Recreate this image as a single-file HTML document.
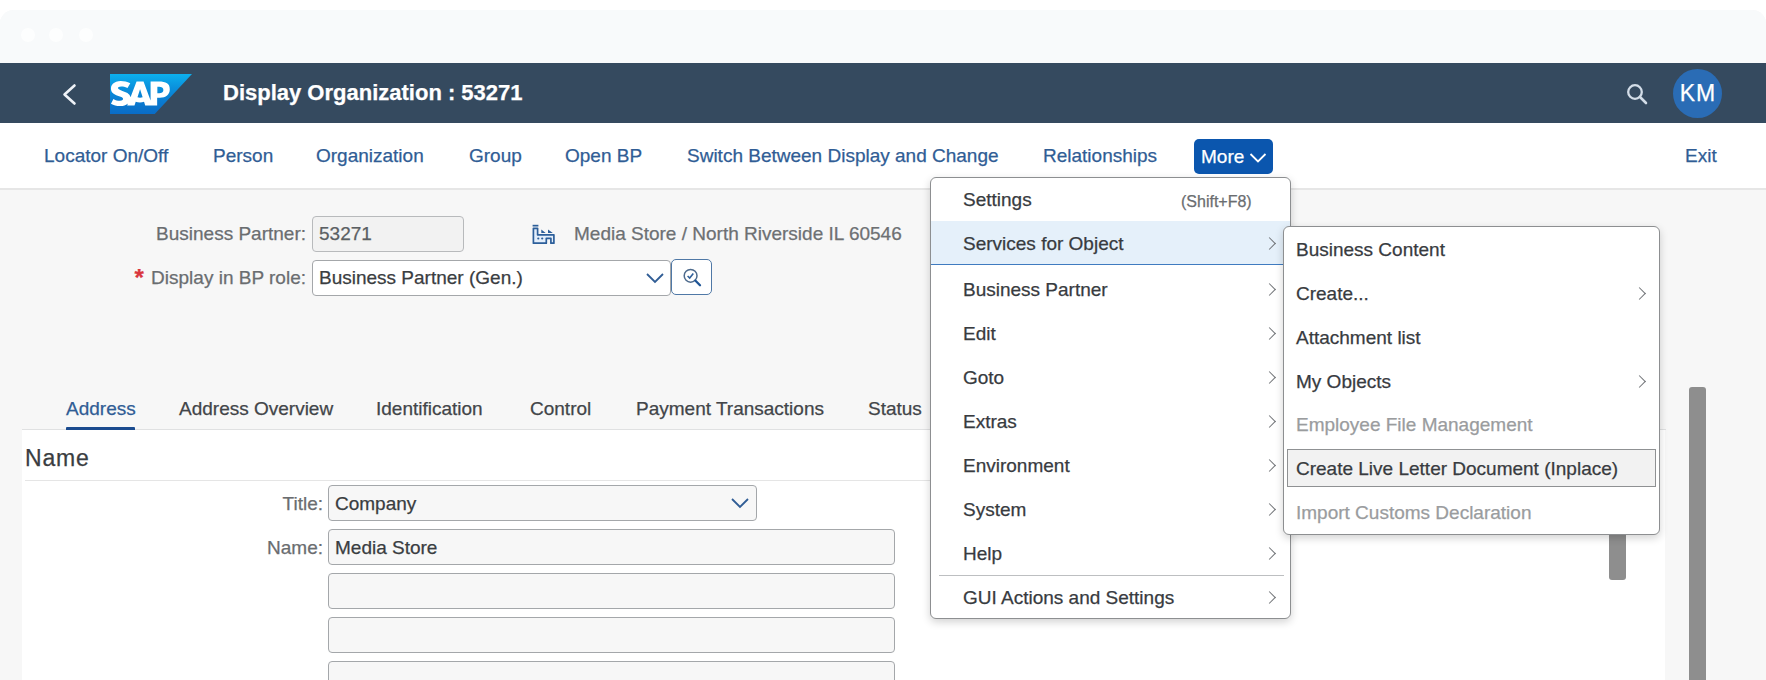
<!DOCTYPE html>
<html><head><meta charset="utf-8">
<style>
*{box-sizing:border-box;margin:0;padding:0}
html,body{width:1766px;height:680px;overflow:hidden;background:#fff;font-family:"Liberation Sans",sans-serif;-webkit-text-stroke:0.25px currentColor}
.abs{position:absolute}
#frame{position:absolute;left:0;top:10px;width:1766px;height:700px;background:#f7f7f7;border-radius:14px 14px 0 0;overflow:hidden}
#titlebar{position:absolute;left:0;top:0;width:1766px;height:53px;background:#f8fafb}
#shell{position:absolute;left:0;top:53px;width:1766px;height:60px;background:#354a5f}
#toolbar{position:absolute;left:0;top:113px;width:1766px;height:67px;background:#fff;border-bottom:2px solid #e6e6e6}
.tb{position:absolute;top:22px;font-size:19px;color:#305d95;white-space:nowrap;line-height:22px}
.lbl{position:absolute;font-size:19px;color:#6a6d70;white-space:nowrap;text-align:right;line-height:22px}
.inp{position:absolute;border:1px solid #a4a7aa;border-radius:4px;background:#fff;font-size:19px;color:#3a3d41;line-height:22px;padding:6px 0 0 6px;white-space:nowrap}
.menu{position:absolute;background:#fff;border:1px solid #8d8f91;border-radius:6px;box-shadow:0 3px 8px rgba(0,0,0,0.18)}
.mi{position:absolute;left:0;right:0;height:44px;font-size:19px;color:#383b3f;line-height:22px;white-space:nowrap}
.mi span.t{position:absolute;left:32px;top:11px}
.chev{position:absolute;width:9px;height:9px;border-right:1.6px solid #6e7175;border-bottom:1.6px solid #6e7175;transform:rotate(-45deg)}
.tab{position:absolute;top:388px;font-size:19px;color:#424549;white-space:nowrap;line-height:22px}
</style></head><body>
<div id="frame">
  <div id="titlebar"><div class="abs" style="left:21px;top:18px;width:14px;height:14px;border-radius:50%;background:#fdfefe"></div><div class="abs" style="left:49px;top:18px;width:14px;height:14px;border-radius:50%;background:#fdfefe"></div><div class="abs" style="left:79px;top:18px;width:14px;height:14px;border-radius:50%;background:#fdfefe"></div></div>
  <div id="shell">
    <!-- back arrow -->
    <svg class="abs" style="left:60px;top:19px" width="20" height="24" viewBox="0 0 20 24"><path d="M14.5 3.5 L4.5 12.5 L14.5 21.5" fill="none" stroke="#eef2f7" stroke-width="2.6" stroke-linecap="round" stroke-linejoin="round"/></svg>
    <!-- SAP logo -->
    <svg class="abs" style="left:110px;top:11px" width="82" height="40" viewBox="0 0 412.38 204" preserveAspectRatio="none">
<defs><linearGradient id="a" x1="206.19" x2="206.19" y1="0" y2="204" gradientUnits="userSpaceOnUse"><stop offset="0" stop-color="#0cb0ee"/><stop offset=".35" stop-color="#0a90dc"/><stop offset=".7" stop-color="#0a7ad0"/><stop offset="1" stop-color="#0a6cc6"/></linearGradient></defs>
<polyline points="0 204 225 204 412.38 0 0 0 0 204" fill="url(#a)"/>
<path d="M244.73,38.36l-40.6,0v96.52L168.66,38.33H133.49l-30.28,80.72C100,98.7,79,91.690,62.4,86.41,51.44,82.89,39.81,77.72,39.93,72c.09-4.68,6.22-9,18.37-8.39,8.17.44,15.37,1.09,29.69,8l14.08-24.53C87.06,39.47,69.19,35.33,54.54,35.32h-.09c-17.09,0-31.32,5.53-40.14,14.65A33.81,33.81,0,0,0,4.69,73.31c-.22,12.27,4.28,21,13.73,27.93,8,5.85,18.16,9.66,27.14,12.44,11.06,3.43,20.1,6.41,20,12.76A9.35,9.35,0,0,1,63,132.93c-2.76,2.850-7,3.92-12.85,4-11.29.24-19.66-1.53-33-9.41L4.83,151.95C18.47,159.71,33,163.6,49.49,163.6l3.71,0c14.36-.26,26-4.7,35.19-12.11.53-.41,1-.84,1.5-1.28L86.33,160.5H123.2l6.18-18.81a67.46,67.46,0,0,0,21.16,3.35,66.27,66.27,0,0,0,20.69-3.17l5.77,18.63h60.14V121.54h13.12c31.7,0,50.45-16.13,50.45-43.19C300.71,48.22,282.49,38.36,244.73,38.36ZM150.91,121a35.72,35.72,0,0,1-12.66-2.22L151.1,78.21h.25L164,118.89A37.82,37.82,0,0,1,150.91,121Zm96.2-23.33h-8.94V65h8.94c11.91,0,21.42,4,21.42,16.13,0,12.59-9.51,16.52-21.42,16.52" fill="#fff" fill-rule="evenodd"/>
    </svg>
    <div class="abs" style="left:223px;top:17px;font-size:22px;font-weight:bold;color:#fff;white-space:nowrap;line-height:26px">Display Organization : 53271</div>
    <!-- search -->
    <svg class="abs" style="left:1625px;top:19px" width="24" height="24" viewBox="0 0 24 24"><circle cx="10" cy="10" r="6.8" fill="none" stroke="#d3dde8" stroke-width="2.3"/><path d="M15 15 L21 21" stroke="#d3dde8" stroke-width="2.6" stroke-linecap="round"/></svg>
    <div class="abs" style="left:1673px;top:6px;width:49px;height:49px;border-radius:50%;background:#2a6cb5;color:#fff;font-size:23px;text-align:center;line-height:49px;letter-spacing:1px;text-indent:1px">KM</div>
  </div>
  <div id="toolbar">
    <div class="tb" style="left:44px">Locator On/Off</div>
    <div class="tb" style="left:213px">Person</div>
    <div class="tb" style="left:316px">Organization</div>
    <div class="tb" style="left:469px">Group</div>
    <div class="tb" style="left:565px">Open BP</div>
    <div class="tb" style="left:687px">Switch Between Display and Change</div>
    <div class="tb" style="left:1043px">Relationships</div>
    <div class="abs" style="left:1194px;top:16px;width:79px;height:35px;background:#0b56ae;border-radius:5px;color:#fff;font-size:19px;line-height:22px;padding:7px 0 0 7px">More
      <svg class="abs" style="left:55px;top:13px" width="18" height="12" viewBox="0 0 18 12"><path d="M1.5 2 L9 9.5 L16.5 2" fill="none" stroke="#fff" stroke-width="1.8"/></svg>
    </div>
    <div class="tb" style="left:1685px">Exit</div>
  </div>

  <!-- header form -->
  <div class="lbl" style="left:100px;top:213px;width:206px">Business Partner:</div>
  <div class="inp" style="left:312px;top:206px;width:152px;height:36px;background:#f2f2f2;color:#5b5f63;border-color:#b8babc">53271</div>
  <svg class="abs" style="left:524px;top:208px" width="40" height="30" viewBox="0 0 40 30"><rect x="8.6" y="6.8" width="5.8" height="1.7" fill="#2d5f9a"/><path d="M9.4 10.3 H13.6 V16.8 H29.9 V25.2 H26.9 V20.3 H22.3 V25.2 H9.4 Z" fill="#e3eefb" stroke="#2d5f9a" stroke-width="1.7" stroke-linejoin="round"/><path d="M17.3 11.6 V14.9 H21.7 Z M24 11.6 V14.9 H28.8 Z" fill="#2d5f9a"/><circle cx="14.3" cy="20.5" r="1.1" fill="#2d5f9a"/><circle cx="18.2" cy="20.5" r="1.1" fill="#2d5f9a"/></svg>
  <div class="lbl" style="left:574px;top:213px;color:#6d7073;text-align:left">Media Store / North Riverside IL 60546</div>
  <div class="lbl" style="left:100px;top:257px;width:206px"><span style="color:#d9363e;font-weight:bold;font-size:24px;margin-right:2px;position:relative;top:2px;line-height:0">*</span> Display in BP role:</div>
  <div class="inp" style="left:312px;top:250px;width:359px;height:36px">Business Partner (Gen.)
    <svg class="abs" style="left:332px;top:10px" width="20" height="14" viewBox="0 0 20 14"><path d="M2 3 L10 11 L18 3" fill="none" stroke="#305d95" stroke-width="1.8"/></svg>
  </div>
  <div class="abs" style="left:671px;top:249px;width:41px;height:36px;border:1.5px solid #4f78a6;border-radius:5px;background:#fff">
    <svg class="abs" style="left:9px;top:6px" width="24" height="24" viewBox="0 0 24 24"><circle cx="9.6" cy="9.8" r="6.4" fill="none" stroke="#4d6a8c" stroke-width="1.5"/><path d="M6.6 10 L8.7 12 L12.3 7.6" fill="none" stroke="#2f5f99" stroke-width="1.6"/><path d="M14.3 14.5 L19 19.2" stroke="#1f5596" stroke-width="2.3" stroke-linecap="round"/></svg>
  </div>

  <!-- tabs -->
  <div style="position:absolute;left:22px;top:419px;width:1644px;height:1px;background:#e0e1e2"></div>
  <div class="tab" style="left:66px;color:#305d95">Address</div>
  <div class="abs" style="left:66px;top:417px;width:69px;height:3px;background:#1b4b8f;border-radius:1px 1px 0 0"></div>
  <div class="tab" style="left:179px">Address Overview</div>
  <div class="tab" style="left:376px">Identification</div>
  <div class="tab" style="left:530px">Control</div>
  <div class="tab" style="left:636px">Payment Transactions</div>
  <div class="tab" style="left:868px">Status</div>

  <!-- white panel -->
  <div class="abs" style="left:22px;top:420px;width:1643px;height:300px;background:#fff">
    <div class="abs" style="left:3px;top:15px;font-size:23px;color:#3a3d41;line-height:26px;letter-spacing:0.8px">Name</div>
    <div class="abs" style="left:3px;top:50px;width:1610px;height:1px;background:#e5e5e5"></div>
  </div>
  <div class="lbl" style="left:100px;top:483px;width:223px">Title:</div>
  <div class="inp" style="left:328px;top:475px;width:429px;height:36px;background:#f7f7f7;padding-top:7px">Company
    <svg class="abs" style="left:401px;top:10px" width="20" height="14" viewBox="0 0 20 14"><path d="M2 3 L10 11 L18 3" fill="none" stroke="#305d95" stroke-width="1.8"/></svg>
  </div>
  <div class="lbl" style="left:100px;top:527px;width:223px">Name:</div>
  <div class="inp" style="left:328px;top:519px;width:567px;height:36px;background:#f7f7f7;padding-top:7px">Media Store</div>
  <div class="inp" style="left:328px;top:563px;width:567px;height:36px;background:#f7f7f7"></div>
  <div class="inp" style="left:328px;top:607px;width:567px;height:36px;background:#f7f7f7"></div>
  <div class="inp" style="left:328px;top:651px;width:567px;height:36px;background:#f7f7f7"></div>

  <!-- scrollbars -->
  <div class="abs" style="left:1609px;top:440px;width:17px;height:130px;background:#8e8e8e;border-radius:3px"></div>
  <div class="abs" style="left:1689px;top:377px;width:17px;height:400px;background:#8e8e8e;border-radius:3px"></div>
</div>

<!-- menu 1 (page coordinates) -->
<div class="menu" style="left:930px;top:177px;width:361px;height:442px">
  <div class="mi" style="top:0;height:43px"><span class="t">Settings</span><span class="abs" style="left:250px;top:13px;font-size:16px;color:#6a6d70">(Shift+F8)</span></div>
  <div class="mi" style="top:43px;height:44px;background:#e5f0fa;border-bottom:1.5px solid #3f7bc0"><span class="t" style="top:12px">Services for Object</span><i class="chev" style="left:334px;top:18px"></i></div>
  <div class="mi" style="top:90px"><span class="t">Business Partner</span><i class="chev" style="left:334px;top:17px"></i></div>
  <div class="mi" style="top:134px"><span class="t">Edit</span><i class="chev" style="left:334px;top:17px"></i></div>
  <div class="mi" style="top:178px"><span class="t">Goto</span><i class="chev" style="left:334px;top:17px"></i></div>
  <div class="mi" style="top:222px"><span class="t">Extras</span><i class="chev" style="left:334px;top:17px"></i></div>
  <div class="mi" style="top:266px"><span class="t">Environment</span><i class="chev" style="left:334px;top:17px"></i></div>
  <div class="mi" style="top:310px"><span class="t">System</span><i class="chev" style="left:334px;top:17px"></i></div>
  <div class="mi" style="top:354px"><span class="t">Help</span><i class="chev" style="left:334px;top:17px"></i></div>
  <div class="abs" style="left:8px;top:397px;width:345px;height:1px;background:#bdbfc1"></div>
  <div class="mi" style="top:398px"><span class="t">GUI Actions and Settings</span><i class="chev" style="left:334px;top:17px"></i></div>
</div>

<!-- menu 2 -->
<div class="menu" style="left:1283px;top:226px;width:377px;height:309px">
  <div class="mi" style="top:1px"><span class="t" style="left:12px">Business Content</span></div>
  <div class="mi" style="top:45px"><span class="t" style="left:12px">Create...</span><i class="chev" style="left:351px;top:17px"></i></div>
  <div class="mi" style="top:89px"><span class="t" style="left:12px">Attachment list</span></div>
  <div class="mi" style="top:133px"><span class="t" style="left:12px">My Objects</span><i class="chev" style="left:351px;top:17px"></i></div>
  <div class="mi" style="top:176px;color:#9a9c9e"><span class="t" style="left:12px">Employee File Management</span></div>
  <div class="mi" style="top:222px;left:3px;right:3px;height:38px;background:#f2f2f2;border:1px solid #8f9193"><span class="t" style="left:8px;top:8px">Create Live Letter Document (Inplace)</span></div>
  <div class="mi" style="top:264px;color:#9a9c9e"><span class="t" style="left:12px">Import Customs Declaration</span></div>
</div>
</body></html>
